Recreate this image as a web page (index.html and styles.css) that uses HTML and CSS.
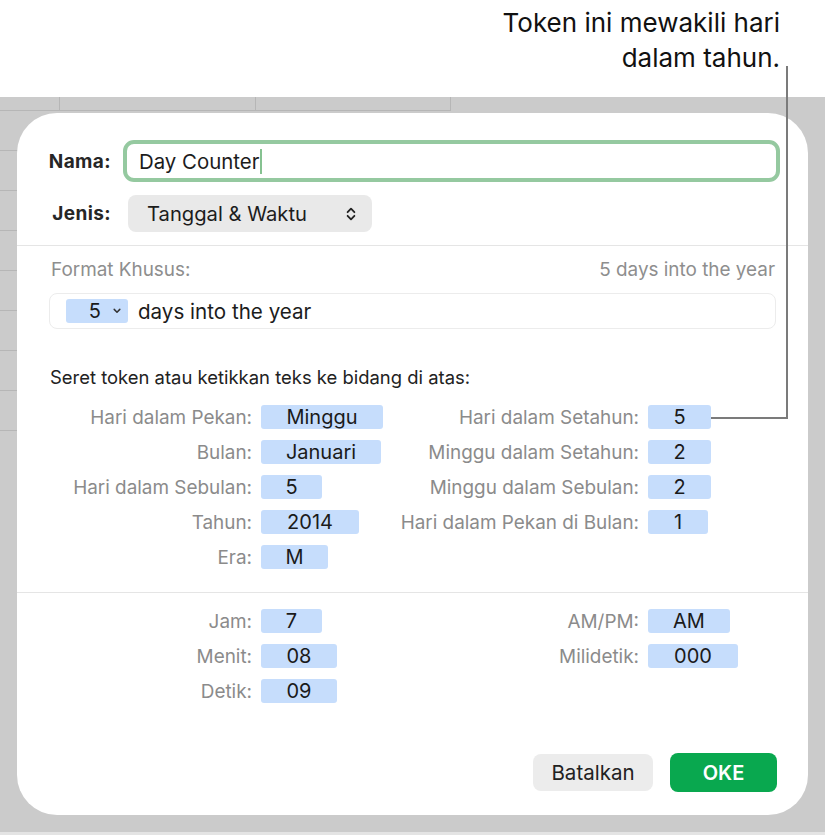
FILE: index.html
```html
<!DOCTYPE html>
<html lang="id">
<head>
<meta charset="utf-8">
<title>Format Khusus</title>
<link rel="stylesheet" href="styles.css">
</head>
<body>
<div class="page">
  <header class="callout">
    <p class="callout-text">Token ini mewakili hari<br>dalam tahun.</p>
  </header>
  <main class="workspace">
    <section class="dialog">
      <div class="dlg-top">
        <span class="fld-label">Nama:</span>
        <div class="name-field"><span class="name-text">Day Counter</span><span class="caret"></span></div>
        <span class="fld-label">Jenis:</span>
        <div class="popup">
          <span>Tanggal &amp; Waktu</span>
          <svg class="updown" width="10" height="16" viewBox="0 0 10 16"><path d="M1.6 6.2 L5 2.6 L8.4 6.2 M1.6 9.8 L5 13.4 L8.4 9.8" fill="none" stroke="#222" stroke-width="1.8" stroke-linecap="round" stroke-linejoin="round"/></svg>
        </div>
      </div>
      <hr class="sep">
      <div class="dlg-format">
        <div class="format-head"><span>Format Khusus:</span><span>5 days into the year</span></div>
        <div class="format-field">
          <span class="tok-sel">5<svg width="8" height="6" viewBox="0 0 8 6"><path d="M1.2 1.4 L4 4.2 L6.8 1.4" fill="none" stroke="#333" stroke-width="1.5" stroke-linecap="round" stroke-linejoin="round"/></svg></span>
          <span class="format-text">days into the year</span>
        </div>
        <p class="hint">Seret token atau ketikkan teks ke bidang di atas:</p>
        <div class="tok-grid">
          <span class="tl">Hari dalam Pekan:</span><span class="tok w122">Minggu</span>
          <span class="tl">Hari dalam Setahun:</span><span class="tok w63">5</span>
          <span class="tl">Bulan:</span><span class="tok w120">Januari</span>
          <span class="tl">Minggu dalam Setahun:</span><span class="tok w63">2</span>
          <span class="tl">Hari dalam Sebulan:</span><span class="tok w61">5</span>
          <span class="tl">Minggu dalam Sebulan:</span><span class="tok w63">2</span>
          <span class="tl">Tahun:</span><span class="tok w98">2014</span>
          <span class="tl">Hari dalam Pekan di Bulan:</span><span class="tok w60">1</span>
          <span class="tl">Era:</span><span class="tok w67">M</span>
        </div>
      </div>
      <hr class="sep">
      <div class="dlg-time">
        <div class="tok-grid tok-grid-time">
          <span class="tl">Jam:</span><span class="tok w61">7</span>
          <span class="tl">AM/PM:</span><span class="tok w82">AM</span>
          <span class="tl">Menit:</span><span class="tok w76">08</span>
          <span class="tl">Milidetik:</span><span class="tok w90">000</span>
          <span class="tl">Detik:</span><span class="tok w76">09</span>
        </div>
        <div class="actions">
          <button class="btn btn-cancel" type="button">Batalkan</button>
          <button class="btn btn-ok" type="button">OKE</button>
        </div>
      </div>
    </section>
  </main>
  <div class="pointer"></div>
</div>
</body>
</html>
```
FILE: styles.css
```css
body {
  margin: 0;
  font-family: Inter, "Noto Sans", "Liberation Sans", sans-serif;
}

.page {
  position: relative;
  width: 825px;
  height: 835px;
  overflow: hidden;
  background: #fff;
}

.callout {
  height: 97px;
  box-sizing: border-box;
  padding: 5px 45px 0 0;
  text-align: right;
}

.callout-text {
  margin: 0;
  font-size: 26px;
  line-height: 35px;
  color: #111;
}

.workspace {
  height: 738px;
  box-sizing: border-box;
  padding: 16px 17px 0 17px;
  border-bottom: 3px solid #e4e4e4;
  background-color: #cbcbcb;
  background-image:
    linear-gradient(#b6b6b6, #b6b6b6),
    linear-gradient(#b6b6b6, #b6b6b6),
    linear-gradient(#b6b6b6, #b6b6b6),
    linear-gradient(#b6b6b6, #b6b6b6),
    repeating-linear-gradient(to bottom, #b6b6b6 0 1px, transparent 1px 40px);
  background-size: 451px 1px, 1px 14px, 1px 14px, 1px 14px, 40px 281px;
  background-position: 0 13px, 59px 0, 255px 0, 450px 0, 0 53px;
  background-repeat: no-repeat;
}

.dialog {
  height: 702px;
  box-sizing: border-box;
  background: #fff;
  border-radius: 40px;
  display: flex;
  flex-direction: column;
}

.dlg-top {
  display: grid;
  grid-template-columns: 61px 1fr;
  column-gap: 12px;
  row-gap: 13px;
  align-items: center;
  padding: 27px 28px 13px 33px;
}

.fld-label {
  justify-self: end;
  font-size: 19px;
  font-weight: 700;
  letter-spacing: 0.4px;
  color: #262626;
}

.name-field {
  height: 42px;
  box-sizing: border-box;
  border: 4px solid #95c9a0;
  border-radius: 11px;
  padding-left: 12px;
  display: flex;
  align-items: center;
}

.name-text {
  font-size: 20.4px;
  color: #1c1c1c;
}

.caret {
  display: inline-block;
  width: 2px;
  height: 25px;
  margin-left: 1px;
  background: #86c291;
}

.popup {
  justify-self: start;
  margin-left: 5px;
  width: 244px;
  height: 37px;
  box-sizing: border-box;
  padding: 0 16px 0 19px;
  background: #e9e9e9;
  border-radius: 8px;
  display: flex;
  align-items: center;
  justify-content: space-between;
  font-size: 20.2px;
  color: #1c1c1c;
}

.sep {
  border: 0;
  margin: 0;
  height: 1px;
  background: #e5e5e5;
}

.dlg-format {
  padding: 14px 32px 23px 32px;
}

.format-head {
  display: flex;
  justify-content: space-between;
  padding: 0 1px 0 2px;
  font-size: 18.9px;
  line-height: 20px;
  color: #8e8e8e;
}

.format-field {
  margin-top: 13px;
  height: 36px;
  box-sizing: border-box;
  border: 1px solid #ececec;
  border-radius: 8px;
  padding-left: 16px;
  display: flex;
  align-items: center;
  gap: 10px;
}

.tok-sel {
  width: 62px;
  height: 24px;
  box-sizing: border-box;
  padding-right: 7px;
  background: #c6ddfc;
  border-radius: 3px;
  display: flex;
  align-items: center;
  justify-content: flex-end;
  gap: 12px;
  font-size: 20px;
  color: #1a1a1a;
}

.format-text {
  font-size: 20.6px;
  color: #1c1c1c;
}

.hint {
  margin: 38px 0 0 1px;
  font-size: 18.45px;
  line-height: 20px;
  color: #222;
}

.tok-grid {
  margin: 18px 0 0 1px;
  display: grid;
  grid-template-columns: 202px 140px 229px auto;
  column-gap: 9px;
  row-gap: 11px;
  grid-auto-rows: 24px;
  align-items: center;
}

.tok-grid-time {
  margin: 0;
}

.tl {
  justify-self: end;
  font-size: 18.9px;
  color: #8b8b8b;
  white-space: nowrap;
}

.tok {
  justify-self: start;
  height: 24px;
  line-height: 24px;
  background: #c6ddfc;
  border-radius: 3px;
  text-align: center;
  font-size: 20px;
  color: #1a1a1a;
}

.w60 { width: 60px; }
.w61 { width: 61px; }
.w63 { width: 63px; }
.w67 { width: 67px; }
.w76 { width: 76px; }
.w82 { width: 82px; }
.w90 { width: 90px; }
.w98 { width: 98px; }
.w120 { width: 120px; }
.w122 { width: 122px; }

.dlg-time {
  flex: 1;
  display: flex;
  flex-direction: column;
  padding: 16px 31px 23px 33px;
}

.actions {
  margin-top: auto;
  display: flex;
  justify-content: flex-end;
  align-items: center;
  gap: 17px;
}

.btn {
  border: 0;
  border-radius: 8px;
  font-family: inherit;
  padding: 0;
}

.btn-cancel {
  width: 120px;
  height: 37px;
  background: #ececec;
  color: #222;
  font-size: 20.5px;
}

.btn-ok {
  width: 107px;
  height: 39px;
  background: #09a84f;
  color: #fff;
  font-size: 20px;
  font-weight: 600;
}

.pointer {
  position: absolute;
  left: 711px;
  top: 66px;
  width: 75px;
  height: 351px;
  border-right: 2px solid #7b7b7b;
  border-bottom: 2px solid #7b7b7b;
}
```
